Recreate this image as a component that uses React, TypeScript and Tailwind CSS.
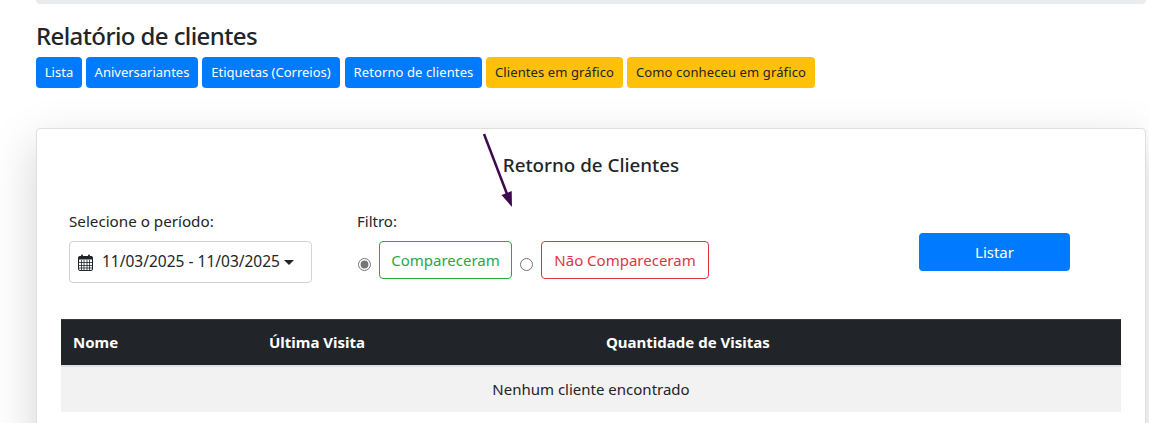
const FONT = "font-['Noto_Sans','Open_Sans',sans-serif]";

const links = [
  { label: 'Lista', cls: 'w-[46px] bg-[#007bff] text-white' },
  { label: 'Aniversariantes', cls: 'ml-[4px] w-[112px] bg-[#007bff] text-white' },
  { label: 'Etiquetas (Correios)', cls: 'ml-[4px] w-[138px] bg-[#007bff] text-white' },
  { label: 'Retorno de clientes', cls: 'ml-[5px] w-[137px] bg-[#007bff] text-white tracking-[0.1px]' },
  { label: 'Clientes em gráfico', cls: 'ml-[4px] w-[137px] bg-[#ffc107] text-[#212529] tracking-[0.1px]' },
  { label: 'Como conheceu em gráfico', cls: 'ml-[4px] w-[188px] bg-[#ffc107] text-[#212529] tracking-[0.12px]' },
];

function CalendarIcon() {
  return (
    <svg width="15" height="17" viewBox="0 0 15 17" className="shrink-0">
      <rect x="0.5" y="2.5" width="14" height="14" rx="1.5" fill="#fff" stroke="#212529" />
      <rect x="0.5" y="2.5" width="14" height="3" fill="#212529" />
      <rect x="3" y="0.5" width="2" height="4" rx="1" fill="#212529" />
      <rect x="10" y="0.5" width="2" height="4" rx="1" fill="#212529" />
      <path d="M0.5 8.5h14M0.5 11.5h14M0.5 14h14M3.5 6v10M6 6v10M9 6v10M11.5 6v10" stroke="#212529" strokeWidth="0.8" fill="none" />
    </svg>
  );
}

export default function App() {
  return (
    <div className={`${FONT} h-[423px] overflow-hidden bg-white pl-[36px] pr-[3px] text-[#212529]`}>
      <div className="h-[4px] rounded-b bg-[#e9ecef]" />

      <h2 className="mt-[17px] text-[24px] leading-[29px] font-medium tracking-[-0.6px]">Relatório de clientes</h2>

      <div className="mt-[7px] flex">
        {links.map(l => (
          <a key={l.label} className={`flex h-[31px] items-center justify-center rounded-[4px] text-[13px] ${l.cls}`}>{l.label}</a>
        ))}
      </div>

      <div className="relative mt-[40px] h-[400px] rounded-[4px] border border-[#dfdfdf] bg-white px-[24px] shadow-[0_16px_48px_rgba(0,0,0,0.175)]">
        <svg width="40" height="80" viewBox="0 0 40 80" className="absolute top-[4px] left-[442px]">
          <path d="M5 1 L28 61" stroke="#3f0a4d" strokeWidth="2.5" fill="none" />
          <path d="M33 74 L22.5 62 L32.7 58 Z" fill="#3f0a4d" />
        </svg>

        <h5 className="pt-[22px] text-center text-[18.8px] leading-[29px] font-medium">Retorno de Clientes</h5>

        <div className="mt-[29px] flex pl-[8px]">
          <div className="w-[288px]">
            <label className="block text-[15.2px] leading-[24px]">Selecione o período:</label>
            <div className="mt-[8px] flex h-[42px] w-[243px] items-center gap-[9px] rounded-[4px] border border-[#ced4da] pl-[8px] text-[15.5px]">
              <CalendarIcon />
              <span>11/03/2025 - 11/03/2025</span>
              <span className="-ml-[5px] h-0 w-0 border-x-[5px] border-t-[5px] border-x-transparent border-t-[#212529]" />
            </div>
          </div>

          <div className="w-[562px]">
            <label className="block text-[15px] leading-[24px]">Filtro:</label>
            <div className="mt-[8px] flex items-start">
              <input type="radio" name="filtro" defaultChecked className="mt-[17px] ml-[1px] size-[13px] accent-[#767676]" />
              <span className="ml-[8px] flex h-[38px] w-[133px] items-center justify-center rounded-[4px] border border-[#28a745] text-[15px] text-[#28a745]">Compareceram</span>
              <input type="radio" name="filtro" className="mt-[17px] ml-[8px] size-[13px] accent-[#767676]" />
              <span className="ml-[8px] flex h-[38px] w-[168px] items-center justify-center rounded-[4px] border border-[#dc3545] text-[15px] text-[#dc3545]">Não Compareceram</span>
            </div>
          </div>

          <button className="mt-[24px] h-[38px] w-[151px] rounded-[4px] bg-[#007bff] text-[15px] text-white">Listar</button>
        </div>

        <table className="mt-[36px] w-full table-fixed border-collapse text-left text-[15px]">
          <thead>
            <tr className="h-[46px] border-t border-b-2 border-t-[#32383e] border-b-[#dee2e6] bg-[#212529] text-white">
              <th className="w-[196px] px-[12px] font-bold">Nome</th>
              <th className="w-[337px] px-[12px] font-bold">Última Visita</th>
              <th className="px-[12px] font-bold">Quantidade de Visitas</th>
            </tr>
          </thead>
          <tbody>
            <tr className="h-[46px] bg-[#f2f2f2]">
              <td colSpan={3} className="text-center">Nenhum cliente encontrado</td>
            </tr>
          </tbody>
        </table>
      </div>
    </div>
  );
}
